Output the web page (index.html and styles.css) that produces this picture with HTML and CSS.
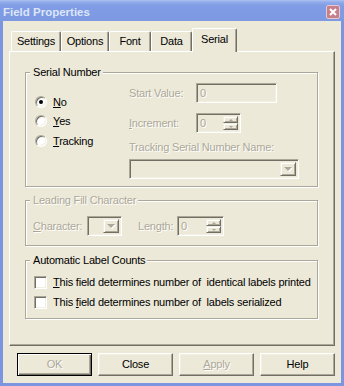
FILE: index.html
```html
<!DOCTYPE html>
<html>
<head>
<meta charset="utf-8">
<link rel="stylesheet" href="styles.css">
</head>
<body>
<div class="window">
  <div class="titlebar">
    <span class="title">Field Properties</span>
    <div class="close"><svg width="12" height="12" viewBox="0 0 12 12"><path d="M3 3 L9 9 M9 3 L3 9" stroke="#fff" stroke-width="2" fill="none"/></svg></div>
  </div>
  <div class="client">
    <div class="tabs">
      <div class="tab w-settings">Settings</div>
      <div class="tab w-options">Options</div>
      <div class="tab w-font">Font</div>
      <div class="tab w-data">Data</div>
      <div class="tab active">Serial</div>
    </div>
    <div class="panel">
      <fieldset class="group g1">
        <legend>Serial Number</legend>
        <div class="g1-body">
          <div class="radios">
            <div class="opt"><span class="radio checked"></span><span><u>N</u>o</span></div>
            <div class="opt"><span class="radio"></span><span><u>Y</u>es</span></div>
            <div class="opt opt-last"><span class="radio"></span><span><u>T</u>racking</span></div>
          </div>
          <div class="fields">
            <div class="frow"><span class="lbl dis">Start Value:</span><span class="edit w81 dis">0</span></div>
            <div class="frow r2"><span class="lbl dis"><u>I</u>ncrement:</span><span class="edit w45 dis"><span class="val">0</span><span class="spin"><span class="sb"><i class="up"></i></span><span class="sb"><i class="dn"></i></span></span></span></div>
            <div class="tlabel dis">Tracking Serial Number Name:</div>
            <div class="edit w170"><span class="val"></span><span class="ddbtn"><i class="dn big"></i></span></div>
          </div>
        </div>
      </fieldset>
      <fieldset class="group g2">
        <legend class="dis">Leading Fill Character</legend>
        <div class="g2-body">
          <span class="clbl dis"><u>C</u>haracter:</span>
          <span class="edit w35"><span class="val"></span><span class="ddbtn"><i class="dn big"></i></span></span>
          <span class="llbl dis">Length:</span>
          <span class="edit w47 dis"><span class="val">0</span><span class="spin"><span class="sb"><i class="up"></i></span><span class="sb"><i class="dn"></i></span></span></span>
        </div>
      </fieldset>
      <fieldset class="group g3">
        <legend>Automatic Label Counts</legend>
        <div class="g3-body">
          <div class="chk-row"><span class="check"></span><span><u>T</u>his field determines number of&nbsp; identical labels printed</span></div>
          <div class="chk-row"><span class="check"></span><span>This <u>f</u>ield determines number of&nbsp; labels serialized</span></div>
        </div>
      </fieldset>
    </div>
    <div class="buttons">
      <div class="btn default dis">OK</div>
      <div class="btn">Close</div>
      <div class="btn dis"><u>A</u>pply</div>
      <div class="btn">Help</div>
    </div>
  </div>
</div>
</body>
</html>
```
FILE: styles.css
```css
* { box-sizing: border-box; }
body {
  margin: 0;
  background: #ECE9D8;
  font-family: "Liberation Sans", Arial, sans-serif;
  font-size: 11px;
  letter-spacing: -0.2px;
  color: #000;
}
.window {
  width: 344px;
  height: 386px;
  display: flex;
  flex-direction: column;
}
.titlebar {
  height: 21px;
  flex: none;
  background: linear-gradient(#AFC3F2 0, #92ACEB 2px, #7F9CE4 6px, #7C99E2 100%);
  display: flex;
  justify-content: space-between;
  align-items: flex-start;
  padding: 5px 4px 0 3px;
}
.title {
  font-weight: bold;
  font-size: 11.5px;
  line-height: 14px;
  letter-spacing: 0;
  color: #DCE5F9;
}
.close {
  width: 14px;
  height: 14px;
  border: 1px solid #E7C9CF;
  border-radius: 2px;
  background: #C5808D;
  display: flex;
  align-items: center;
  justify-content: center;
}
.close svg { display: block; }
.client {
  flex: 1;
  border: 3px solid #7C95E0;
  border-top: 0;
  background: #ECE9D8;
}
.tabs {
  display: flex;
  align-items: flex-end;
  height: 30px;
  padding-left: 8px;
}
.tab {
  height: 20px;
  border-top: 1px solid #fff;
  border-left: 1px solid #fff;
  border-right: 1px solid #716F64;
  box-shadow: inset -1px 0 0 #ACA899;
  border-radius: 2px 2px 0 0;
  text-align: center;
  padding-top: 3px;
  line-height: 13px;
  background: #ECE9D8;
}
.w-settings { width: 50px; }
.w-options { width: 48px; }
.w-font { width: 42px; }
.w-data { width: 41px; }
.tab.active {
  width: 45px;
  height: 24px;
  margin-bottom: -1px;
  padding-top: 4px;
  position: relative;
  z-index: 1;
}
.panel {
  margin-left: 6px;
  width: 326px;
  height: 295px;
  border-top: 1px solid #fff;
  border-left: 1px solid #fff;
  border-right: 1px solid #716F64;
  border-bottom: 1px solid #716F64;
  box-shadow: inset -1px -1px 0 #ACA899;
  padding-top: 1px;
}
.group {
  margin: 0 0 0 15px;
  padding: 0;
  min-width: 0;
  width: 293px;
  border: 1px solid #ACA899;
  box-shadow: 1px 1px 0 #fff, inset 1px 1px 0 #fff;
}
.group legend {
  padding: 0 2px 0 3px;
  margin-left: 4px;
  line-height: 13px;
  background: #ECE9D8;
}
.g1 { margin-top: 13px; height: 121px; }
.g2 { margin-top: 7px; height: 52px; }
.g3 { margin-top: 8px; height: 65px; }

.dis { color: #ACA899; text-shadow: 1px 1px 0 #fff; }

.g1-body { display: flex; padding: 4px 0 0 9px; }
.radios {
  width: 94px;
  padding-top: 13px;
  display: flex;
  flex-direction: column;
  gap: 7px;
}
.opt {
  display: flex;
  align-items: center;
  gap: 6px;
  height: 12px;
  line-height: 12px;
}
.opt-last { margin-top: 1px; }
.radio {
  width: 12px;
  height: 12px;
  flex: none;
  border-radius: 50%;
  background: #fff;
  border: 1px solid;
  border-color: #ACA899 #fff #fff #ACA899;
  box-shadow: inset 1px 1px 0 #716F64, inset -1px -1px 0 #F1EFE2;
  display: flex;
  align-items: center;
  justify-content: center;
}
.radio.checked::after {
  content: "";
  width: 4px;
  height: 4px;
  border-radius: 50%;
  background: #000;
}
.fields { display: flex; flex-direction: column; }
.frow { display: flex; align-items: center; height: 20px; }
.frow .lbl { width: 67px; line-height: 13px; }
.r2 { margin-top: 10px; }
.tlabel { margin-top: 8px; line-height: 13px; }

.edit {
  height: 20px;
  display: flex;
  align-items: stretch;
  border: 1px solid;
  border-color: #ACA899 #fff #fff #ACA899;
  box-shadow: inset 1px 1px 0 #716F64, inset -1px -1px 0 #F1EFE2;
  background: #ECE9D8;
  padding: 2px 2px 2px 3px;
  line-height: 14px;
}
.edit .val { flex: 1; }
.w81 { width: 81px; }
.w45 { width: 45px; }
.w47 { width: 47px; }
.w35 { width: 35px; }
.w170 { width: 170px; margin-top: 5px; }

.spin {
  width: 15px;
  display: flex;
  flex-direction: column;
}
.sb, .ddbtn {
  flex: 1;
  display: flex;
  align-items: center;
  justify-content: center;
  border: 1px solid;
  border-color: #F1EFE2 #716F64 #716F64 #F1EFE2;
  box-shadow: inset 1px 1px 0 #fff, inset -1px -1px 0 #ACA899;
  background: #ECE9D8;
}
.ddbtn { flex: none; width: 16px; }
i.up, i.dn {
  width: 0;
  height: 0;
  border-left: 2px solid transparent;
  border-right: 2px solid transparent;
}
i.up { border-bottom: 2px solid #ACA899; }
i.dn { border-top: 2px solid #ACA899; }
i.dn.big {
  border-left-width: 4px;
  border-right-width: 4px;
  border-top-width: 4px;
  border-top-color: #ACA899;
  filter: drop-shadow(1px 1px 0 #fff);
}

.g2-body {
  display: flex;
  align-items: center;
  padding: 9px 0 0 7px;
}
.clbl { width: 54px; line-height: 13px; }
.llbl { width: 39px; margin-left: 16px; line-height: 13px; }

.g3-body {
  display: flex;
  flex-direction: column;
  gap: 7px;
  padding: 9px 0 0 8px;
}
.chk-row {
  display: flex;
  align-items: center;
  gap: 6px;
  height: 13px;
  line-height: 13px;
}
.check {
  width: 13px;
  height: 13px;
  flex: none;
  background: #fff;
  border: 1px solid;
  border-color: #ACA899 #fff #fff #ACA899;
  box-shadow: inset 1px 1px 0 #716F64, inset -1px -1px 0 #F1EFE2;
}

.buttons {
  display: flex;
  gap: 6px;
  margin: 7px 0 0 14px;
}
.btn {
  width: 75px;
  height: 23px;
  border: 1px solid;
  border-color: #fff #716F64 #716F64 #fff;
  box-shadow: inset -1px -1px 0 #ACA899, inset 1px 1px 0 #F1EFE2;
  text-align: center;
  line-height: 21px;
}
.btn.default {
  border-color: #000;
  box-shadow: inset 1px 1px 0 #fff, inset -1px -1px 0 #716F64, inset -2px -2px 0 #ACA899;
}
```
